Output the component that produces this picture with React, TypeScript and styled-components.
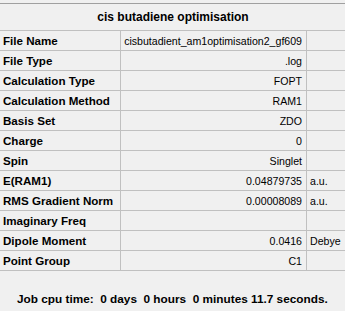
import React from "react";
import styled, { createGlobalStyle } from "styled-components";

const Global = createGlobalStyle`
  html, body {
    margin: 0;
    padding: 0;
    background: #f0f0f0;
  }
  body {
    font-family: "Liberation Sans", Arial, sans-serif;
    color: #000;
  }
`;

const Page = styled.div`
  width: 345px;
  height: 311px;
  padding-top: 3px;
  box-sizing: border-box;
  background: #f0f0f0;
  overflow: hidden;
`;

const Table = styled.div`
  display: grid;
  grid-template-columns: 121px 186px 1fr;
  border-top: 1px solid #a0a0a0;
`;

const Title = styled.div`
  grid-column: 1 / -1;
  height: 26px;
  display: flex;
  align-items: center;
  justify-content: center;
  font-weight: bold;
  font-size: 12px;
  border-bottom: 1px solid #c0c0c0;
  padding-left: 1px;
`;

const Cell = styled.div<{ $align?: "left" | "right"; $bold?: boolean; $last?: boolean }>`
  height: 19px;
  min-width: 0;
  border-bottom: 1px solid #c0c0c0;
  border-right: ${(p) => (p.$last ? "none" : "1px solid #c0c0c0")};
  display: flex;
  align-items: center;
  justify-content: ${(p) => (p.$align === "right" ? "flex-end" : "flex-start")};
  padding: ${(p) => (p.$align === "right" ? "0 4px 0 0" : "0 0 0 3px")};
  font-size: ${(p) => (p.$bold ? "11.6px" : "10.6px")};
  font-weight: ${(p) => (p.$bold ? "bold" : "normal")};
  white-space: nowrap;
  overflow: hidden;
  box-sizing: content-box;
`;

const Footer = styled.div`
  padding: 21px 0 0 17px;
  font-size: 11.8px;
  font-weight: bold;
  white-space: pre;
`;

const rows: [string, string, string][] = [
  ["File Name", "cisbutadient_am1optimisation2_gf609", ""],
  ["File Type", ".log", ""],
  ["Calculation Type", "FOPT", ""],
  ["Calculation Method", "RAM1", ""],
  ["Basis Set", "ZDO", ""],
  ["Charge", "0", ""],
  ["Spin", "Singlet", ""],
  ["E(RAM1)", "0.04879735", "a.u."],
  ["RMS Gradient Norm", "0.00008089", "a.u."],
  ["Imaginary Freq", "", ""],
  ["Dipole Moment", "0.0416", "Debye"],
  ["Point Group", "C1", ""],
];

export default function App() {
  return (
    <Page>
      <Global />
      <Table>
        <Title>cis butadiene optimisation</Title>
        {rows.map(([label, value, unit]) => (
          <React.Fragment key={label}>
            <Cell $bold>{label}</Cell>
            <Cell $align="right">{value}</Cell>
            <Cell $last>{unit}</Cell>
          </React.Fragment>
        ))}
      </Table>
      <Footer>{"Job cpu time:  0 days  0 hours  0 minutes 11.7 seconds."}</Footer>
    </Page>
  );
}
